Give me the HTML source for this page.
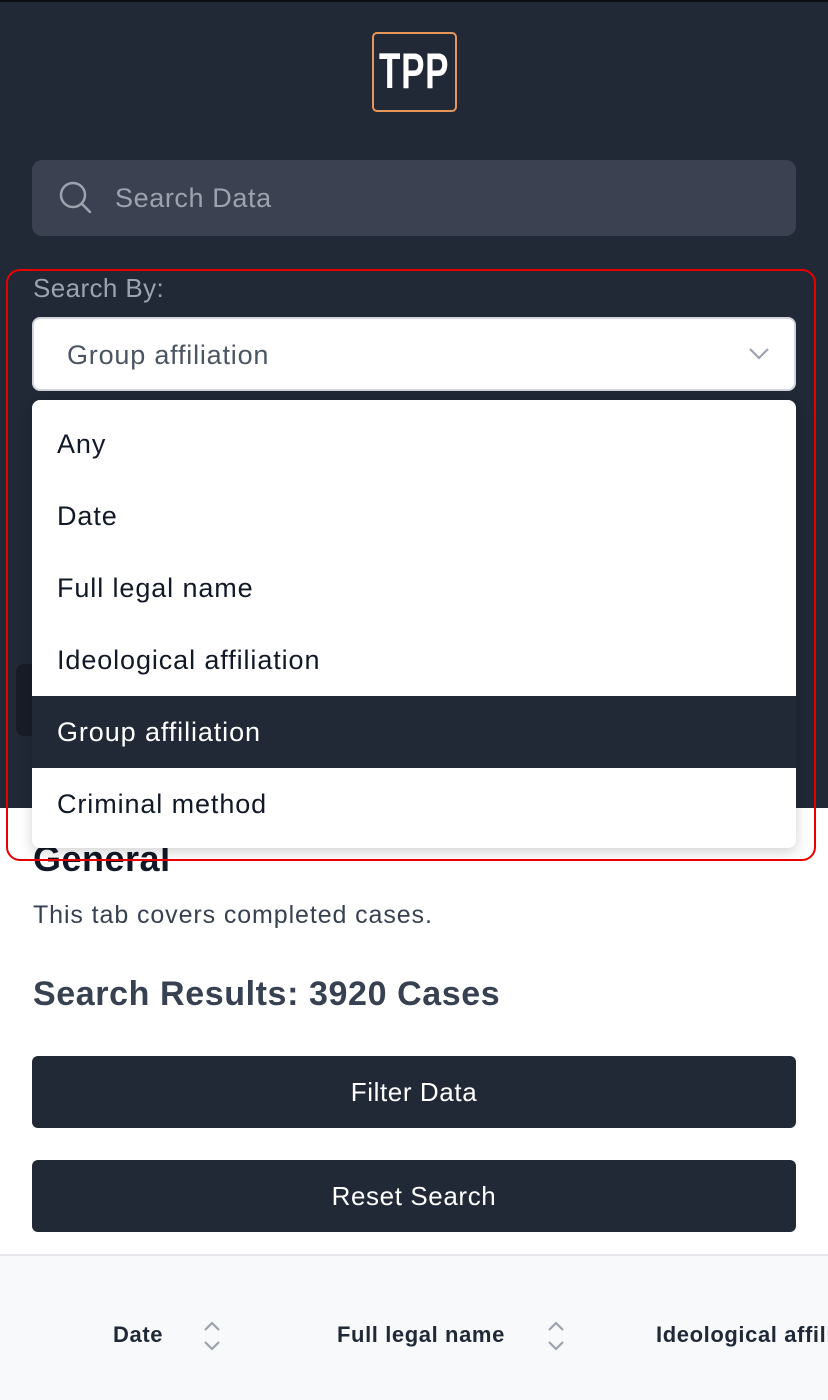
<!DOCTYPE html>
<html><head><meta charset="utf-8"><style>
*{box-sizing:border-box;margin:0;padding:0}
html,body{width:828px;height:1400px;overflow:hidden}
body{background:#fff;font-family:"Liberation Sans",Arial,sans-serif;position:relative}
.a{position:absolute}
.dark{left:0;top:0;width:828px;height:808px;background:#212836;border-top:2px solid #0b0d12}
.logo{left:372px;top:32px;width:85px;height:80px;border:2.5px solid #e8955a;border-radius:5px}
.logo span{position:absolute;left:-10px;top:0;width:100px;text-align:center;color:#fff;font-weight:bold;font-size:50px;line-height:74px;transform:scaleX(0.7);transform-origin:50% 50%;letter-spacing:1px}
.search{left:32px;top:160px;width:764px;height:76px;background:#3b4150;border-radius:10px}
.search span{position:absolute;left:83px;top:23px;color:#9ca3af;font-size:27px;letter-spacing:0.6px}
.lbl{left:33px;top:273px;color:#9ca3af;font-size:26px;letter-spacing:0.4px}
.sel{left:32px;top:317px;width:764px;height:74px;background:#fff;border:2px solid #d1d5db;border-radius:8px}
.sel span{position:absolute;left:33px;top:21px;color:#4b5563;font-size:27px;letter-spacing:0.8px}
.dd{left:32px;top:400px;width:764px;height:448px;background:#fff;border-radius:8px;box-shadow:0 4px 14px rgba(0,0,0,.18);overflow:hidden}
.it{position:absolute;left:0;width:764px;height:72px;padding-left:25px;line-height:72px;font-size:27px;letter-spacing:0.9px;color:#111827}
.it.on{background:#212836;color:#fff}
.red{left:6px;top:269px;width:810px;height:592px;border:2px solid #e80000;border-radius:14px}
.btn{left:32px;width:764px;height:72px;background:#212836;border-radius:6px;color:#fff;font-size:26px;letter-spacing:0.6px;text-align:center;line-height:72px}
.th{font-weight:bold;font-size:22px;letter-spacing:0.6px;color:#1f2937;top:1321px;white-space:nowrap}
</style></head><body>
<div class="a dark"></div>
<div class="a" style="left:16px;top:664px;width:20px;height:72px;background:#171c27;border-radius:8px 0 0 8px"></div>
<div class="a logo"><span>TPP</span></div>
<div class="a search"><svg class="a" style="left:26px;top:20px" width="36" height="36" viewBox="0 0 36 36"><circle cx="15" cy="15" r="12" fill="none" stroke="#9ca3af" stroke-width="2.5"/><path d="M24 24 L32 32" stroke="#9ca3af" stroke-width="2.5" stroke-linecap="round"/></svg><span>Search Data</span></div>
<div class="a lbl">Search By:</div>
<div class="a sel"><span>Group affiliation</span><svg class="a" style="left:714px;top:28px" width="22" height="14" viewBox="0 0 22 14"><path d="M2 2 L11 11 L20 2" fill="none" stroke="#9ca3af" stroke-width="2.2"/></svg></div>
<div class="a" style="left:33px;top:838px;font-size:36px;font-weight:bold;color:#111827;letter-spacing:0.5px">General</div>
<div class="a dd">
<div class="it" style="top:8px">Any</div>
<div class="it" style="top:80px">Date</div>
<div class="it" style="top:152px">Full legal name</div>
<div class="it" style="top:224px">Ideological affiliation</div>
<div class="it on" style="top:296px">Group affiliation</div>
<div class="it" style="top:368px">Criminal method</div>
</div>
<div class="a red"></div>
<div class="a" style="left:33px;top:901px;font-size:25px;letter-spacing:0.9px;color:#374151">This tab covers completed cases.</div>
<div class="a" style="left:33px;top:975px;font-size:34px;font-weight:bold;letter-spacing:0.6px;color:#374151">Search Results: 3920 Cases</div>
<div class="a btn" style="top:1056px">Filter Data</div>
<div class="a btn" style="top:1160px">Reset Search</div>
<div class="a" style="left:0;top:1254px;width:828px;height:146px;background:#f8f9fb;border-top:2px solid #e5e7eb;overflow:hidden">
<div class="a th" style="left:113px;top:66px">Date</div>
<svg class="a" style="left:202px;top:64px" width="20" height="32" viewBox="0 0 20 32"><path d="M3 10 L10 3 L17 10 M3 22 L10 29 L17 22" fill="none" stroke="#9ca3af" stroke-width="2.2"/></svg>
<div class="a th" style="left:337px;top:66px">Full legal name</div>
<svg class="a" style="left:546px;top:64px" width="20" height="32" viewBox="0 0 20 32"><path d="M3 10 L10 3 L17 10 M3 22 L10 29 L17 22" fill="none" stroke="#9ca3af" stroke-width="2.2"/></svg>
<div class="a th" style="left:656px;top:66px">Ideological affiliation</div>
</div>
</body></html>
